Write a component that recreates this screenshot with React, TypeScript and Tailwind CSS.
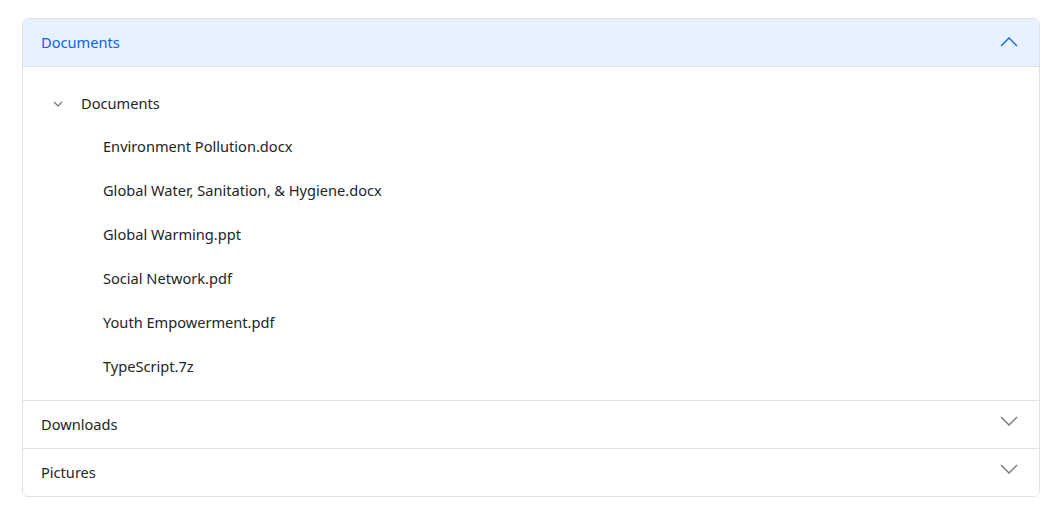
import { useState } from "react";

const files = [
  "Environment Pollution.docx",
  "Global Water, Sanitation, & Hygiene.docx",
  "Global Warming.ppt",
  "Social Network.pdf",
  "Youth Empowerment.pdf",
  "TypeScript.7z",
];

function Chevron({ up, className }: { up?: boolean; className: string }) {
  return (
    <svg
      width="18"
      height="18"
      viewBox="0 0 18 18"
      fill="none"
      stroke="currentColor"
      strokeWidth="1.3"
      className={className}
    >
      {up ? <path d="M1 13L9 5L17 13" /> : <path d="M1 5L9 13L17 5" />}
    </svg>
  );
}

export default function App() {
  const [open, setOpen] = useState<string>("Documents");
  const [treeOpen, setTreeOpen] = useState(true);

  const toggle = (name: string) => setOpen(open === name ? "" : name);

  return (
    <div
      className="w-full min-h-screen bg-white pl-[22px] pr-[20px] pt-[18px]"
      style={{ fontFamily: '"Noto Sans", "Open Sans", sans-serif' }}
    >
      <div className="border border-[#dee2e6] rounded-[6px] overflow-hidden text-[14.6px] text-[#212529]">
        {/* Documents */}
        <button
          onClick={() => toggle("Documents")}
          className={`w-full h-[48px] flex items-center justify-between pl-[18px] pr-[21px] ${
            open === "Documents"
              ? "bg-[#e7f1ff] text-[#0c63e4] border-b border-[#dee2e6]"
              : "bg-white"
          }`}
        >
          <span>Documents</span>
          <Chevron
            up={open === "Documents"}
            className={open === "Documents" ? "text-[#0c63e4] -mt-[1px]" : "text-[#6c757d]"}
          />
        </button>
        {open === "Documents" && (
          <div className="pt-[22px] pb-[11px] px-[28px]">
            <button
              onClick={() => setTreeOpen(!treeOpen)}
              className="flex items-center h-[30px]"
            >
              <svg
                width="12"
                height="12"
                viewBox="0 0 12 12"
                fill="none"
                stroke="#6c757d"
                strokeWidth="1.2"
                className="ml-[1px] -mt-[1px]"
              >
                <path d="M2 4L6 8L10 4" />
              </svg>
              <span className="ml-[17px]">Documents</span>
            </button>
            {treeOpen && (
              <ul className="mt-[6px]">
                {files.map((f) => (
                  <li key={f} className="h-[44px] flex items-center pl-[52px]">
                    {f}
                  </li>
                ))}
              </ul>
            )}
          </div>
        )}

        {["Downloads", "Pictures"].map((name) => (
          <div key={name} className="border-t border-[#dee2e6]">
            <button
              onClick={() => toggle(name)}
              className="w-full h-[47px] flex items-center justify-between pl-[18px] pr-[21px] bg-white"
            >
              <span>{name}</span>
              <Chevron up={open === name} className="text-[#6c757d] -mt-[8px]" />
            </button>
            {open === name && (
              <div className="px-[28px] py-[16px] text-[#6c757d]">No items</div>
            )}
          </div>
        ))}
      </div>
    </div>
  );
}
